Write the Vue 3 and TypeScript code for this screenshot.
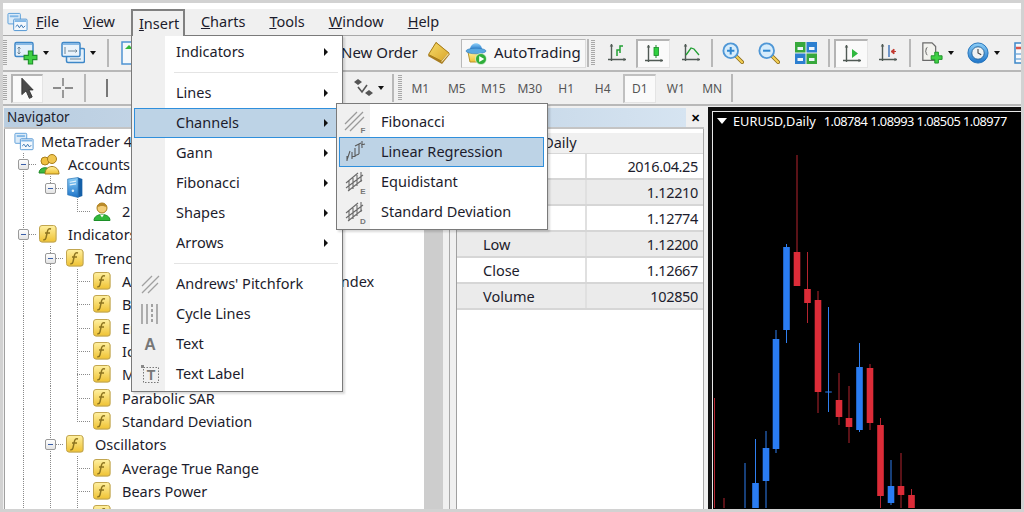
<script setup lang="ts">
type Cell = 'v' | 't' | 'l' | 'b'
interface Row { cells: Cell[]; exp?: boolean; icon: string; text: string; root?: boolean }
interface MenuItem {
  label?: string
  sub?: boolean
  sep?: boolean
  active?: boolean
  icon?: string
  letter?: string
  lx?: number
  ly?: number
  ls?: number
}

const leaf = (text: string, last = false): Row => ({ cells: ['v', 'v', last ? 'l' : 't'], icon: 'fn', text })

const rows: Row[] = [
  { cells: [], icon: 'logo', text: 'MetaTrader 4', root: true },
  { cells: ['t'], exp: true, icon: 'accounts', text: 'Accounts' },
  { cells: ['v', 'l'], exp: true, icon: 'server', text: 'Adm' },
  { cells: ['v', 'b', 'l'], icon: 'user', text: '2' },
  { cells: ['t'], exp: true, icon: 'fn', text: 'Indicators' },
  { cells: ['v', 't'], exp: true, icon: 'fn', text: 'Trend' },
  leaf('Average Directional Movement Index'),
  leaf('Bollinger Bands'),
  leaf('Envelopes'),
  leaf('Ichimoku Kinko Hyo'),
  leaf('Moving Average'),
  leaf('Parabolic SAR'),
  leaf('Standard Deviation', true),
  { cells: ['v', 't'], exp: true, icon: 'fn', text: 'Oscillators' },
  leaf('Average True Range'),
  leaf('Bears Power'),
  leaf('Bulls Power'),
]

const mainMenu: MenuItem[] = [
  { label: 'Indicators', sub: true },
  { sep: true },
  { label: 'Lines', sub: true },
  { label: 'Channels', sub: true, active: true },
  { label: 'Gann', sub: true },
  { label: 'Fibonacci', sub: true },
  { label: 'Shapes', sub: true },
  { label: 'Arrows', sub: true },
  { sep: true },
  { label: "Andrews' Pitchfork", icon: 'pitch' },
  { label: 'Cycle Lines', icon: 'cycle' },
  { label: 'Text', letter: 'A', lx: 10, ly: 16, ls: 16 },
  { label: 'Text Label', icon: 'txtlabel', letter: 'T', lx: 11, ly: 16, ls: 14 },
]

const subMenu: MenuItem[] = [
  { label: 'Fibonacci', icon: 'subfib', letter: 'F', lx: 20, ly: 23, ls: 8 },
  { label: 'Linear Regression', icon: 'sublr', active: true },
  { label: 'Equidistant', icon: 'channel', letter: 'E', lx: 20, ly: 23.5, ls: 8 },
  { label: 'Standard Deviation', icon: 'channel', letter: 'D', lx: 20, ly: 23.5, ls: 8 },
]

const menuBar = [
  ['F', 'ile'], ['V', 'iew'], ['I', 'nsert'], ['C', 'harts'], ['T', 'ools'], ['W', 'indow'], ['H', 'elp'],
]

const frames = ['M1', 'M5', 'M15', 'M30', 'H1', 'H4', 'D1', 'W1', 'MN']

const quotes = [
  ['Date', '2016.04.25'],
  ['Open', '1.12210'],
  ['High', '1.12774'],
  ['Low', '1.12200'],
  ['Close', '1.12667'],
  ['Volume', '102850'],
]

// x, wick top, wick bottom, body top, body bottom, up
const candles: [number, number, number, number, number, boolean][] = [
  [714.5, 398, 512, 508, 512, false],
  [724, 498, 512, 512, 512, false],
  [745, 463, 512, 508, 512, true],
  [755.5, 439, 512, 483, 512, true],
  [766, 431, 512, 448, 481, true],
  [776, 330, 453, 339, 449, true],
  [786.5, 244, 343, 247, 330, true],
  [797, 155, 286, 252, 286, false],
  [807.5, 252, 323, 289, 303, false],
  [818, 291, 413, 300, 392, false],
  [828.5, 307, 412, 391.5, 392.5, true],
  [839, 373, 425, 400, 417, false],
  [849, 386, 443, 418, 427, false],
  [859.5, 343, 432, 367, 430, true],
  [870, 364, 430, 368, 423, false],
  [880.5, 418, 512, 425, 496, false],
  [891, 460, 505, 486, 503, true],
  [901, 453, 512, 486, 495, false],
  [911.5, 489, 512, 495, 512, false],
]
</script>

<template>
  <div class="frame">
    <svg class="defs" aria-hidden="true">
      <defs>
        <linearGradient id="gold" x1="0" y1="0" x2="0" y2="1">
          <stop offset="0" stop-color="#fff0a0" />
          <stop offset="1" stop-color="#efc233" />
        </linearGradient>
        <linearGradient id="bookfill" x1="0" y1="0" x2="1" y2="1">
          <stop offset="0" stop-color="#f7dc6a" />
          <stop offset="1" stop-color="#d9a52a" />
        </linearGradient>
        <linearGradient id="steel" x1="0" y1="0" x2="0" y2="1">
          <stop offset="0" stop-color="#8fd0f8" />
          <stop offset="1" stop-color="#1c73c8" />
        </linearGradient>
      </defs>
      <symbol id="plus" viewBox="0 0 14 14">
        <path d="M5 1h4v4h4v4H9v4H5V9H1V5h4z" fill="#3fd044" stroke="#1c8f28" />
      </symbol>
      <symbol id="logo" viewBox="0 0 22 20">
        <rect x="1" y="1" width="13" height="11" rx="1" fill="#dcebf8" stroke="#5a9ed8" />
        <path d="M3 4h9" stroke="#7fb6e6" stroke-width="2" />
        <rect x="7" y="7" width="14" height="12" rx="1" fill="#f3f8fd" stroke="#4d93d2" />
        <path d="M8 9h12" stroke="#7fb6e6" stroke-width="2" />
        <path d="M9 15l2-2 2 3 2-3 2 3 2-2" fill="none" stroke="#2f6fb0" />
      </symbol>
      <symbol id="newchart" viewBox="0 0 24 24">
        <rect x="1" y="1.500" width="18" height="14" rx="1.500" fill="#e4f0fa" stroke="#3d87c8" stroke-width="1.500" />
        <path d="M2 3h16" stroke="#86b8e4" stroke-width="2" />
        <path d="M5 6v7M3.500 7.500L5 6l1.500 1.500M3.500 11.500L5 13l1.500-1.500" fill="none" stroke="#6f8595" />
        <use href="#plus" x="9" y="9" width="15" height="15" />
      </symbol>
      <symbol id="profile" viewBox="0 0 24 24">
        <rect x="5.500" y="7.500" width="18" height="14" rx="1.500" fill="#e4f0fa" stroke="#3d87c8" stroke-width="1.500" />
        <rect x="1" y="1.500" width="18" height="14" rx="1.500" fill="#e9f3fb" stroke="#3d87c8" stroke-width="1.500" />
        <path d="M2 3h16" stroke="#86b8e4" stroke-width="2" />
        <path d="M4 6v7M7 10h9M14.500 8.500L16 10l-1.500 1.500M20 18H9" fill="none" stroke="#6f8595" />
      </symbol>
      <symbol id="doc" viewBox="0 0 24 24">
        <path d="M2 1h14l4 4v18H2z" fill="#f4f8fb" stroke="#4d93d2" stroke-width="1.500" />
        <path d="M5 8l4-4 4 4z" fill="#35b83a" />
      </symbol>
      <symbol id="book" viewBox="0 0 24 24">
        <path d="M1 15L9 1l14 12-8 10z" fill="#a87c1e" />
        <path d="M1.500 13.500L9 1.500l13 10.500-7.500 8z" fill="url(#bookfill)" stroke="#a87e1c" />
        <path d="M14.500 20l7-8v1.500l-7 8z" fill="#f6e7b0" />
      </symbol>
      <symbol id="auto" viewBox="0 0 22 24">
        <path d="M3 11h14v10H5z" fill="url(#gold)" stroke="#b8952c" />
        <path d="M5 9c0-9 12-9 12 0z" fill="url(#steel)" />
        <ellipse cx="11" cy="10" rx="10" ry="2.800" fill="#5aa8e0" stroke="#2f78b8" stroke-width=".6" />
        <circle cx="16" cy="18" r="5.500" fill="#2fae3a" stroke="#fff" stroke-width=".6" />
        <path d="M14.200 15l5 3-5 3z" fill="#fff" />
      </symbol>
      <symbol id="axes" viewBox="0 0 20 20">
        <path d="M4.500 1v17M1 16.500h18" stroke="#505a55" stroke-width="1.400" fill="none" />
        <path d="M2.700 3.500l1.800-2.500 1.800 2.500zM16.500 14.700l2.500 1.800-2.500 1.800z" fill="#505a55" />
      </symbol>
      <symbol id="bars" viewBox="0 0 20 20">
        <use href="#axes" width="20" height="20" />
        <path d="M10 13V7h3M13 10V3h3" fill="none" stroke="#22a034" stroke-width="1.500" />
      </symbol>
      <symbol id="candle" viewBox="0 0 20 20">
        <use href="#axes" width="20" height="20" />
        <path d="M12 1v13" stroke="#1a8a28" />
        <rect x="10" y="3.500" width="4.500" height="8" fill="#2fd03f" stroke="#1a8a28" stroke-width=".8" />
      </symbol>
      <symbol id="linec" viewBox="0 0 20 20">
        <use href="#axes" width="20" height="20" />
        <path d="M5 12l5-7 3 1 5 6" fill="none" stroke="#22a034" stroke-width="1.300" />
      </symbol>
      <symbol id="zoomin" viewBox="0 0 24 24">
        <path d="M15 15l7 7" stroke="#8a6a18" stroke-width="4" stroke-linecap="round" />
        <path d="M15 15l7 7" stroke="#f3cf56" stroke-width="2.400" stroke-linecap="round" />
        <circle cx="9.500" cy="9.500" r="8" fill="#d6ecfb" stroke="#4f97d6" stroke-width="2" />
        <path d="M5.500 9.500h8M9.500 5.500v8" stroke="#2f86cf" stroke-width="2.200" />
      </symbol>
      <symbol id="zoomout" viewBox="0 0 24 24">
        <path d="M15 15l7 7" stroke="#8a6a18" stroke-width="4" stroke-linecap="round" />
        <path d="M15 15l7 7" stroke="#f3cf56" stroke-width="2.400" stroke-linecap="round" />
        <circle cx="9.500" cy="9.500" r="8" fill="#d6ecfb" stroke="#4f97d6" stroke-width="2" />
        <path d="M5.500 9.500h8" stroke="#2f86cf" stroke-width="2.200" />
      </symbol>
      <symbol id="tile" viewBox="0 0 22 22">
        <rect x="0" y="0" width="10.500" height="10.500" fill="#37a83c" />
        <rect x="11.500" y="0" width="10.500" height="10.500" fill="#2c7fd0" />
        <rect x="0" y="11.500" width="10.500" height="10.500" fill="#2c7fd0" />
        <rect x="11.500" y="11.500" width="10.500" height="10.500" fill="#37a83c" />
        <path d="M2.500 5h5.500v3H2.500zM14 5h5.500v3H14zM2.500 16h5.500v3H2.500zM14 16h5.500v3H14z" fill="#eef6fb" />
      </symbol>
      <symbol id="sheet" viewBox="0 0 22 22">
        <rect x="1" y="1" width="20" height="20" fill="#f7f9fc" stroke="#3d87c8" stroke-width="1.500" />
        <path d="M2 6h18" stroke="#d9534a" stroke-width="2.500" />
        <path d="M2 12h18M2 17h18" stroke="#7fb0dc" stroke-width="1.500" />
      </symbol>
      <symbol id="scroll" viewBox="0 0 20 20">
        <use href="#axes" width="20" height="20" />
        <path d="M10 5l6 4.500-6 4.500z" fill="#2fb83f" />
      </symbol>
      <symbol id="shift" viewBox="0 0 20 20">
        <use href="#axes" width="20" height="20" />
        <path d="M11 2v12" stroke="#3a6fb8" stroke-width="1.400" />
        <path d="M18 8.500h-3M13 8.500l3-2.500v5z" fill="#c23a30" stroke="#c23a30" />
      </symbol>
      <symbol id="template" viewBox="0 0 24 24">
        <path d="M2 1h10l4 4v15H2z" fill="#f2f2ee" stroke="#6a6a6a" stroke-width="1.300" />
        <path d="M7 6c-2 0-1 3-2 4 1 1 0 4 2 4" fill="none" stroke="#555" />
        <use href="#plus" x="10" y="10" width="14" height="14" />
      </symbol>
      <symbol id="clock" viewBox="0 0 24 24">
        <circle cx="12" cy="12" r="11" fill="url(#steel)" stroke="#1d6fb8" />
        <circle cx="12" cy="12" r="6.800" fill="#f0f2f2" stroke="#1d5f98" />
        <path d="M12 7.500v4.500l3.500 2" fill="none" stroke="#444" stroke-width="1.200" />
      </symbol>
      <symbol id="cursor" viewBox="0 0 16 24">
        <path d="M2 1l12 12.500H9.500l3.500 7.500-3 1.500-3.500-8L2 18.500z" fill="#4a4a4a" stroke="#333" />
      </symbol>
      <symbol id="cross" viewBox="0 0 20 20">
        <path d="M10 0v8M10 12v8M0 10h8M12 10h8" stroke="#6b6b6b" stroke-width="1.300" />
      </symbol>
      <symbol id="arrows" viewBox="0 0 20 20">
        <path d="M1 4l4-3 4 3-4 3zM12 15l4-3 4 3-4 3z" fill="#555" />
        <path d="M5 9l4 5 5-7" fill="none" stroke="#555" stroke-width="1.600" />
      </symbol>
      <symbol id="accounts" viewBox="0 0 22 22">
        <circle cx="7" cy="8" r="4" fill="#f0c040" stroke="#a87e1c" />
        <path d="M1 20c0-7 12-7 12 0z" fill="#3fb83f" stroke="#1f8a28" />
        <circle cx="14" cy="6" r="4.500" fill="#f0c650" stroke="#a87e1c" />
        <path d="M7 21c0-10 14-10 14 0z" fill="url(#gold)" stroke="#a87e1c" />
      </symbol>
      <symbol id="server" viewBox="0 0 16 20">
        <path d="M1 2l10-1.500v19L1 17z" fill="url(#steel)" stroke="#1f6ab0" stroke-width=".6" />
        <path d="M11 .5l4 1.500v16l-4 1.500z" fill="#1560a8" />
        <path d="M3 5l6-1M3 7.500l6-1" stroke="#dff0fb" stroke-width="1.200" />
        <circle cx="6" cy="13" r="1.200" fill="#dff0fb" />
      </symbol>
      <symbol id="user" viewBox="0 0 18 20">
        <path d="M1 19c0-8 16-8 16 0z" fill="#32b83a" stroke="#1c8f28" />
        <circle cx="9" cy="6.500" r="5" fill="#f3cd78" stroke="#a87e1c" />
        <path d="M4 6c0-6 10-6 10 0-3-2-7-2-10 0z" fill="#b98a2a" />
        <path d="M7 13l2 3 2-3z" fill="#fff" />
      </symbol>
      <symbol id="fn" viewBox="0 0 18 18">
        <rect x="1" y="1" width="16.500" height="16.500" rx="2.500" fill="#d8c27e" />
        <rect x=".5" y=".5" width="16.500" height="16.500" rx="2.500" fill="url(#gold)" stroke="#c2a650" />
        <path d="M12 4c-2.300-.6-3.200.4-3.700 2.800l-1.300 6c-.4 1.800-1.300 2.200-2.700 1.900M6 8h5" fill="none" stroke="#8d7420" stroke-width="1.500" />
      </symbol>
      <symbol id="pitch" viewBox="0 0 20 20">
        <path d="M2 12L12 2M2 19L19 2M8 19L18 9" stroke="#a0a0a0" stroke-width="1.300" fill="none" />
      </symbol>
      <symbol id="cycle" viewBox="0 0 20 20">
        <path d="M2 0v20M7 0v20M17 0v20" stroke="#808080" stroke-width="1.200" />
        <path d="M12 0v20" stroke="#777" stroke-width="1.300" stroke-dasharray="3 2" />
      </symbol>
      <symbol id="txtlabel" viewBox="0 0 20 20">
        <rect x="3.500" y="3.500" width="15" height="15" fill="none" stroke="#777" stroke-dasharray="1.500 1.500" />
        <path d="M1 1h3v3H1z" fill="#888" />
      </symbol>
      <symbol id="subfib" viewBox="0 0 24 24">
        <path d="M2 14L14 2M2 20L20 2M7 21L21 7" stroke="#9a9a9a" stroke-width="1.300" fill="none" />
      </symbol>
      <symbol id="sublr" viewBox="0 0 24 24">
        <path d="M4 20l3-9M4 16v5M9 12v7M12 8v9M12 6l6-3M16 4v10M19 1v7M16 14l-7 3M18 5l4-1" stroke="#5a5a5a" stroke-width="1.100" fill="none" />
      </symbol>
      <symbol id="channel" viewBox="0 0 24 24">
        <path d="M3 13L15 3M3 18L20 5M5 21L19 10M6 10v11M10 8v11M14 5v11M18 2v10" stroke="#6a6a6a" stroke-width="1.100" fill="none" />
      </symbol>
    </svg>

    <div class="menubar">
      <svg class="i logo"><use href="#logo" /></svg>
      <span v-for="m in menuBar" :key="m[0]" class="mb-item" :class="{ open: m[0] === 'I' }"><u>{{ m[0] }}</u>{{ m[1] }}</span>
    </div>

    <div class="toolbar t1">
      <span class="grip"></span>
      <svg class="i s24 m7"><use href="#newchart" /></svg><span class="caret"></span>
      <svg class="i s24 m12"><use href="#profile" /></svg><span class="caret"></span>
      <span class="sep m11"></span>
      <svg class="i s24 m11"><use href="#doc" /></svg>
      <span class="covered"></span>
      <span class="tool-text">New Order</span>
      <svg class="i s24 m14"><use href="#book" /></svg>
      <span class="auto"><svg class="i auto-ico"><use href="#auto" /></svg><span class="tool-label">AutoTrading</span></span>
      <span class="sep m1"></span>
      <span class="grip m2"></span>
      <svg class="i s20 m12"><use href="#bars" /></svg>
      <span class="pressed m9 p34"><svg class="i s20"><use href="#candle" /></svg></span>
      <svg class="i s20 m11"><use href="#linec" /></svg>
      <span class="sep m10"></span>
      <svg class="i s22 m9"><use href="#zoomin" /></svg>
      <svg class="i s22 m14"><use href="#zoomout" /></svg>
      <svg class="i s22 m15"><use href="#tile" /></svg>
      <span class="sep m11"></span>
      <span class="pressed m4 p34"><svg class="i s20"><use href="#scroll" /></svg></span>
      <svg class="i s20 m10"><use href="#shift" /></svg>
      <span class="sep m11"></span>
      <svg class="i s22 m10"><use href="#template" /></svg><span class="caret"></span>
      <svg class="i s22 m13"><use href="#clock" /></svg><span class="caret"></span>
      <svg class="i s22 m14"><use href="#sheet" /></svg>
    </div>

    <div class="toolbar t2">
      <span class="grip"></span>
      <span class="pressed m4 p32"><svg class="i cursor"><use href="#cursor" /></svg></span>
      <svg class="i s20 m10"><use href="#cross" /></svg>
      <span class="sep m11"></span>
      <span class="vline"></span>
      <span class="covered2"></span>
      <svg class="i s20"><use href="#arrows" /></svg><span class="caret"></span>
      <span class="sep m8"></span>
      <span class="grip m4"></span>
      <span v-for="f in frames" :key="f" class="tf"><span :class="{ 'tf-on': f === 'D1' }">{{ f }}</span></span>
      <span class="sep"></span>
    </div>

    <div class="workspace">
      <section class="navigator">
        <div class="title">Navigator</div>
        <div class="tree-wrap">
          <div class="tree">
            <div v-for="r in rows" :key="r.text" class="row">
              <span v-for="(c, i) in r.cells" :key="i" class="cell" :class="c">
                <span v-if="r.exp && i === r.cells.length - 1" class="exp"></span>
              </span>
              <span class="tree-ico" :class="{ root: r.root, wide: r.icon === 'accounts', tall: r.icon === 'server' || r.icon === 'user' }"><svg class="i"><use :href="'#' + r.icon" /></svg></span>
              <span class="row-text">{{ r.text }}</span>
            </div>
          </div>
          <div class="scroll"></div>
        </div>
      </section>

      <div class="splitter"></div>

      <section class="data">
        <div class="title d-title"><span class="d-bar"></span><span class="close">✕</span></div>
        <div class="d-body">
          <div class="d-head">EURUSD,Daily</div>
          <div v-for="(q, i) in quotes" :key="q[0]" class="d-row" :class="{ alt: i % 2 === 1 }">
            <span class="d-l">{{ q[0] }}</span><span class="d-v">{{ q[1] }}</span>
          </div>
        </div>
      </section>

      <section class="chart">
        <div class="chart-in">
          <svg class="candles" viewBox="713 112 308 396">
            <g v-for="(c, i) in candles" :key="i">
              <rect :x="c[0] - 0.5" :y="c[1]" width="1" :height="c[2] - c[1]" :fill="c[5] ? '#2f7ff0' : '#b3242f'" />
              <rect :x="c[0] - 3.3" :y="c[3]" width="6.600" :height="c[4] - c[3]" :fill="c[5] ? '#2a7cf2' : '#dc2c38'" />
            </g>
          </svg>
          <div class="chart-head"><span class="tri"></span><span>EURUSD,Daily</span><span class="ohlc">1.08784 1.08993 1.08505 1.08977</span></div>
        </div>
      </section>
    </div>

    <div class="menu main">
      <template v-for="(m, i) in mainMenu" :key="i">
        <div v-if="m.sep" class="m-sep"></div>
        <div v-else class="m-row" :class="{ active: m.active }">
          <span class="m-ico">
            <svg v-if="m.icon || m.letter" class="i m-svg" viewBox="0 0 20 20">
              <use v-if="m.icon" :href="'#' + m.icon" />
              <text v-if="m.letter" class="ltr" :x="m.lx" :y="m.ly" :font-size="m.ls">{{ m.letter }}</text>
            </svg>
          </span>
          <span class="m-label">{{ m.label }}</span>
          <span v-if="m.sub" class="m-arrow"></span>
        </div>
      </template>
    </div>

    <div class="menu sub">
      <div v-for="m in subMenu" :key="m.label" class="m-row" :class="{ active: m.active }">
        <span class="m-ico">
          <svg class="i m-svg big" viewBox="0 0 24 24">
            <use :href="'#' + m.icon" />
            <text v-if="m.letter" class="ltr" :x="m.lx" :y="m.ly" :font-size="m.ls">{{ m.letter }}</text>
          </svg>
        </span>
        <span class="m-label">{{ m.label }}</span>
      </div>
    </div>
  </div>
</template>

<style>
html, body { margin: 0; padding: 0; background: #fff; }
</style>

<style scoped>
.frame {
  position: relative;
  box-sizing: border-box;
  width: 1024px;
  height: 512px;
  overflow: hidden;
  display: flex;
  flex-direction: column;
  padding-top: 6px;
  background: #fff;
  border: 3px solid #d2d2d2;
  font-family: "Noto Sans", sans-serif;
  font-size: 14.5px;
  color: #1c1c2c;
}
.defs { position: absolute; width: 0; height: 0; }
.i { display: block; flex: none; overflow: visible; }
.s24 { width: 24px; height: 24px; }
.s22 { width: 22px; height: 22px; }
.s20 { width: 20px; height: 20px; }
.m1 { margin-left: 1px; } .m2 { margin-left: 2px; } .m4 { margin-left: 4px; }
.m7 { margin-left: 7px; } .m8 { margin-left: 8px; } .m9 { margin-left: 9px; }
.m10 { margin-left: 10px; } .m11 { margin-left: 11px; } .m12 { margin-left: 12px; }
.m13 { margin-left: 13px; } .m14 { margin-left: 14px; } .m15 { margin-left: 15px; }

.menubar {
  display: flex;
  align-items: stretch;
  gap: 8px;
  height: 26px;
  flex: none;
  background: #f0f0f0;
  border-bottom: 1px solid #a8a8a8;
}
.logo { width: 21px; height: 20px; margin: 3px -8px 0 4px; }
.mb-item { padding: 0 8px; line-height: 25px; }
.mb-item.open {
  box-sizing: border-box;
  width: 54px;
  height: 27px;
  background: #f0f0f0;
  border: 2px solid #808080;
  border-bottom: 0;
  padding: 0 6px;
  line-height: 24px;
  white-space: nowrap;
  position: relative;
  z-index: 3;
}
.toolbar {
  display: flex;
  align-items: center;
  flex: none;
  background: #f0f0f0;
  border-bottom: 2px solid #b8b8b8;
}
.t1 { height: 34px; }
.t2 { height: 32px; }
.grip {
  width: 4px;
  height: 26px;
  flex: none;
  background: repeating-linear-gradient(to bottom, #a8a8a8 0 1px, #f0f0f0 1px 2px);
}
.sep { width: 2px; height: 28px; flex: none; background: #b8b8b8; }
.caret {
  width: 0;
  height: 0;
  flex: none;
  margin-left: 5px;
  border-left: 3.500px solid transparent;
  border-right: 3.500px solid transparent;
  border-top: 4px solid #111;
}
.covered { width: 197px; flex: none; }
.covered2 { width: 245px; flex: none; }
.vline { width: 2px; height: 18px; margin-left: 20px; flex: none; background: #777; }
.tool-text { width: 72px; flex: none; white-space: nowrap; font-size: 15px; padding-bottom: 2px; }
.tool-label { padding-bottom: 2px; }
.auto {
  display: flex;
  align-items: center;
  gap: 7px;
  box-sizing: border-box;
  width: 125px;
  height: 29px;
  margin-left: 10px;
  padding-left: 3px;
  flex: none;
  background: #f8f8f8;
  border: 1px solid #dcdcdc;
  border-top-color: #b8b8b8;
  border-left-color: #b8b8b8;
  font-size: 15px;
}
.auto-ico { width: 22px; height: 24px; }
.pressed {
  display: flex;
  align-items: center;
  justify-content: center;
  box-sizing: border-box;
  height: 29px;
  flex: none;
  background: #fafafa;
  border: 1px solid #e4e4e4;
  border-top: 2px solid #b4b4b4;
  border-left: 2px solid #b4b4b4;
}
.p34 { width: 34px; }
.p32 { width: 32px; }
.cursor { width: 15px; height: 23px; }
.tf {
  display: flex;
  align-items: center;
  justify-content: center;
  width: 36.500px;
  flex: none;
  font-size: 12px;
  color: #555;
}
.tf-on {
  display: flex;
  align-items: center;
  justify-content: center;
  box-sizing: border-box;
  width: 33px;
  height: 29px;
  background: #fafafa;
  border: 1px solid #e4e4e4;
  border-top: 2px solid #c0c0c0;
  border-left: 2px solid #c0c0c0;
}

.workspace {
  flex: 1;
  min-height: 0;
  display: flex;
  background: #f0f0f0;
  padding-top: 2px;
}
.navigator {
  width: 441px;
  flex: none;
  display: flex;
  flex-direction: column;
  min-height: 0;
  padding-left: 1px;
  box-sizing: border-box;
}
.title {
  height: 19px;
  flex: none;
  line-height: 18px;
  padding-left: 3px;
  font-size: 13.500px;
  background: linear-gradient(to right, #b9cde0, #d3e2f0);
  border-bottom: 2px solid #c4c4c4;
}
.tree-wrap {
  flex: 1;
  min-height: 0;
  display: flex;
  border-left: 1px solid #a0a0a0;
}
.tree {
  width: 419px;
  flex: none;
  padding: .300px 0 0 4px;
  box-sizing: border-box;
  background: #fff;
  overflow: hidden;
}
.scroll { width: 19px; flex: none; background: #cdcdcd; }
.row {
  display: flex;
  align-items: center;
  height: 23.350px;
  white-space: nowrap;
}
.cell {
  position: relative;
  width: 27px;
  height: 100%;
  flex: none;
}
.cell.v, .cell.t {
  background: repeating-linear-gradient(to bottom, #8a8a8a 0 1px, transparent 1px 2px) 14px 0 / 1px 100% no-repeat;
}
.cell.t::after, .cell.l::after {
  content: "";
  position: absolute;
  left: 14px;
  top: 50%;
  width: 13px;
  height: 1px;
  background: repeating-linear-gradient(to right, #8a8a8a 0 1px, transparent 1px 2px);
}
.cell.l {
  background: repeating-linear-gradient(to bottom, #8a8a8a 0 1px, transparent 1px 2px) 14px 0 / 1px 50% no-repeat;
}
.exp {
  position: absolute;
  z-index: 1;
  left: 9px;
  top: 50%;
  box-sizing: border-box;
  width: 11px;
  height: 11px;
  margin-top: -5px;
  background: linear-gradient(#fff, #e4e4e4);
  border: 1px solid #9a9a9a;
  border-radius: 2px;
}
.exp::after {
  content: "";
  position: absolute;
  left: 2px;
  top: 4px;
  width: 5px;
  height: 1px;
  background: #3a5fa8;
}
.tree-ico { width: 18px; height: 18px; margin: 0 11px 0 3px; flex: none; }
.tree-ico .i { width: 18px; height: 18px; }
.tree-ico.root { margin: 0 8px 0 6px; }
.tree-ico.root .i { width: 20px; height: 19px; margin-left: -1px; }
.tree-ico.wide .i { width: 22px; height: 22px; margin: -2px 0 0 -1px; }
.tree-ico.tall .i { width: 18px; height: 21px; margin-top: -1.500px; }
.row-text { flex: none; }
.splitter {
  width: 13px;
  flex: none;
  box-sizing: border-box;
  border-right: 1px solid #a0a0a0;
  background: linear-gradient(to right, #f0f0f0 0 5px, #a8a8a8 5px 6px, #f0f0f0 6px);
}
.data {
  width: 247px;
  flex: none;
  display: flex;
  flex-direction: column;
  min-height: 0;
}
.d-title { display: flex; padding: 0; background: none; }
.d-bar { width: 229px; background: linear-gradient(to right, #c3d5e6, #d6e4f1); }
.close { flex: 1; text-align: center; font-size: 11px; font-weight: 700; color: #000; line-height: 19px; }
.d-body { flex: 1; background: #fff; border-right: 1px solid #a8a8a8; }
.d-head {
  height: 20px;
  margin-top: 4px;
  line-height: 19px;
  padding-left: 26px;
  background: #f0f0f0;
  border-bottom: 1px solid #d8d8d8;
}
.d-row {
  display: flex;
  box-sizing: border-box;
  height: 26px;
  line-height: 24px;
  border-bottom: 2px solid #d6d6d6;
}
.d-row.alt { background: #ebebeb; }
.d-l { width: 130px; box-sizing: border-box; padding-left: 26px; border-right: 2px solid #e0e0e0; }
.d-v { flex: 1; text-align: right; padding-right: 5px; letter-spacing: -.35px; }
.chart {
  flex: 1;
  margin-top: -1px;
  margin-left: 4px;
  padding: 4px 0 0 4px;
  background: #101010;
  display: flex;
  min-width: 0;
}
.chart-in {
  position: relative;
  flex: 1;
  background: #000;
  border-top: 1px solid #e8e8e8;
  border-left: 1px solid #e8e8e8;
  overflow: hidden;
}
.candles { display: block; width: 308px; height: 396px; }
.chart-head {
  position: absolute;
  left: 4px;
  top: 0;
  display: flex;
  align-items: center;
  height: 18px;
  color: #fff;
  font-size: 12.800px;
  white-space: nowrap;
}
.tri {
  width: 0;
  height: 0;
  margin-right: 6px;
  border-left: 5.500px solid transparent;
  border-right: 5.500px solid transparent;
  border-top: 6px solid #fff;
}
.ohlc { margin-left: 8px; letter-spacing: -.53px; }

.menu {
  position: absolute;
  z-index: 2;
  box-sizing: border-box;
  background: #fff;
  border: 1px solid #7a7a7a;
  box-shadow: 2px 2px 2px rgba(0, 0, 0, .15);
}
.main { left: 128px; top: 32px; width: 212px; height: 357px; padding: 1px 1px 0; }
.sub { left: 333px; top: 100px; width: 212px; height: 127px; padding: 3px 1px 0; z-index: 4; }
.main::before, .sub::before {
  content: "";
  position: absolute;
  left: 0;
  top: 0;
  bottom: 0;
  width: 33px;
  background: #f0f0f0;
}
.m-row {
  position: relative;
  display: flex;
  align-items: center;
  box-sizing: border-box;
  height: 30px;
  white-space: nowrap;
}
.m-row.active {
  background: #bdd3e6;
  outline: 1.500px solid #2f8fdc;
  outline-offset: -1.500px;
}
.main .m-row.active { margin-left: 1px; }
.sub .m-row.active { margin-right: 2px; margin-left: 1px; }
.m-ico { display: flex; justify-content: center; width: 33px; flex: none; }
.m-svg { width: 20px; height: 20px; }
.m-svg.big { width: 24px; height: 24px; }
.ltr {
  font-family: "Liberation Sans", sans-serif;
  font-weight: 700;
  text-anchor: middle;
  fill: #777;
}
.m-label { margin-left: 10px; padding-bottom: 2px; }
.m-row.active .m-ico { margin-left: -1px; }
.m-arrow {
  position: absolute;
  right: 13px;
  top: 50%;
  margin-top: -4px;
  border-top: 4px solid transparent;
  border-bottom: 4px solid transparent;
  border-left: 4px solid #111;
}
.m-sep { height: 1px; margin: 5px 3px 5px 41px; background: #e4e4e4; }
</style>
